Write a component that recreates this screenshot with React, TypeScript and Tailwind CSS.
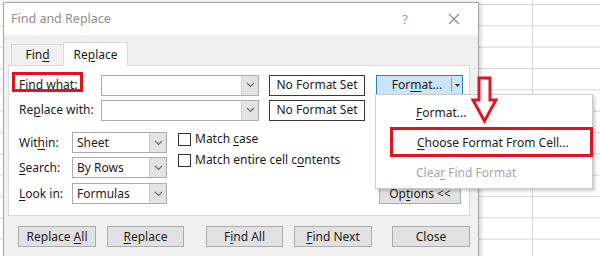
import React from "react";

const U = ({ children }: { children: React.ReactNode }) => (
  <span className="underline underline-offset-[2px] decoration-[1px]">{children}</span>
);

const Chevron = () => (
  <svg width="9" height="6" viewBox="0 0 9 6">
    <path d="M1 1 L4.5 4.5 L8 1" fill="none" stroke="#6d6d6d" strokeWidth="1.2" />
  </svg>
);

function Combo({ className, text }: { className: string; text?: string }) {
  return (
    <div className={"flex border border-[#acacac] bg-white " + className}>
      <div className="flex-1 pl-[4px] flex items-center text-[#1b1b1b]">{text}</div>
      <div className="w-[17px] bg-[#e3e3e3] border-l border-[#cfcfcf] flex items-center justify-center">
        <Chevron />
      </div>
    </div>
  );
}

function Btn({ className, children }: { className: string; children: React.ReactNode }) {
  return (
    <div
      className={
        "h-[21px] bg-[#e1e1e1] border border-[#adadad] flex items-center justify-center text-[#1b1b1b] " +
        className
      }
    >
      <span className="whitespace-pre">{children}</span>
    </div>
  );
}

function Check({ children }: { children: React.ReactNode }) {
  return (
    <div className="flex items-center h-[14px]">
      <div className="w-[13px] h-[13px] border border-[#333] bg-white" />
      <span className="ml-[4px] text-[#1b1b1b]">{children}</span>
    </div>
  );
}

export default function App() {
  return (
    <div className="relative w-[600px] h-[256px] overflow-hidden bg-white [font-family:'Noto_Sans',sans-serif] text-[12px] leading-none [background-image:linear-gradient(to_bottom,#d6d6d6_1px,transparent_1px),linear-gradient(to_right,#d6d6d6_1px,transparent_1px)] [background-size:100%_21.33px,600px_100%] [background-position:0_4px,532px_0] [background-repeat:repeat-y,no-repeat]">
      {/* Dialog window */}
      <div className="absolute left-[3px] top-[2px] w-[476px] h-[262px] bg-[#f0f0f0] border border-[#a6a6a6] shadow-[2px_0_4px_rgba(0,0,0,0.18)] flex flex-col">
        {/* Title bar */}
        <div className="h-[32px] bg-white flex items-center pl-[7px] pr-[18px] text-[#8d8d8d] text-[12.5px]">
          <span>Find and Replace</span>
          <span className="ml-auto mr-[40px] text-[13px] text-[#9a9a9a]">?</span>
          <svg width="12" height="12" viewBox="0 0 12 12">
            <path d="M1 1 L11 11 M11 1 L1 11" stroke="#8a8a8a" strokeWidth="1.1" />
          </svg>
        </div>

        {/* Tabs */}
        <div className="flex items-end pl-[7px] h-[30px]">
          <div className="w-[53px] h-[21px] border border-b-0 border-[#d9d9d9] flex items-center justify-center text-[#1b1b1b]">
            <span>
              Fin<U>d</U>
            </span>
          </div>
          <div className="w-[65px] h-[24px] -ml-[1px] bg-white border border-b-0 border-[#d9d9d9] flex items-center justify-center text-[#1b1b1b] relative top-[1px] z-10">
            <span>
              Re<U>p</U>lace
            </span>
          </div>
        </div>

        {/* Panel */}
        <div className="ml-[4px] w-[462px] h-[151px] bg-white border border-[#d9d9d9] pt-[9px] pl-[10px] relative">
          <div className="flex items-center h-[20px]">
            <div className="w-[82px] relative">
              <span className="text-[#1b1b1b]">
                Fi<U>n</U>d what:
              </span>
              <div className="absolute left-[-7px] top-[-7px] w-[71px] h-[20px] border-[3px] border-[#e0141e]" />
            </div>
            <Combo className="w-[158px] h-[21px]" />
            <div className="ml-[10px] w-[96px] h-[21px] border-[1.5px] border-[#3a3a3a] flex items-center justify-center text-[#1b1b1b]">
              No Format Set
            </div>
            <div className="ml-[11px] w-[87px] h-[20px] bg-[#cce4f7] border border-[#2c7cc5] flex items-center text-[#1b1b1b]">
              <div className="flex-1 text-center pl-[6px]">
                For<U>m</U>at...
              </div>
              <div className="w-[11px] h-[14px] border-l border-[#7aa6cf] flex items-center justify-center">
                <svg width="5" height="3" viewBox="0 0 5 3">
                  <path d="M0 0 L5 0 L2.5 3 Z" fill="#333" />
                </svg>
              </div>
            </div>
          </div>
          <div className="flex items-center h-[20px] mt-[5px]">
            <div className="w-[82px] text-[#1b1b1b]">
              Re<U>p</U>lace with:
            </div>
            <Combo className="w-[158px] h-[21px]" />
            <div className="ml-[10px] w-[96px] h-[21px] border-[1.5px] border-[#3a3a3a] flex items-center justify-center text-[#1b1b1b]">
              No Format Set
            </div>
          </div>

          <div className="flex mt-[12px]">
            <div className="flex flex-col gap-[4px]">
              <div className="flex items-center h-[21px]">
                <div className="w-[53px] text-[#1b1b1b]">
                  Wit<U>h</U>in:
                </div>
                <Combo className="w-[95px] h-[21px]" text="Sheet" />
              </div>
              <div className="flex items-center h-[21px]">
                <div className="w-[53px] text-[#1b1b1b]">
                  <U>S</U>earch:
                </div>
                <Combo className="w-[95px] h-[21px]" text="By Rows" />
              </div>
              <div className="flex items-center h-[21px] mt-[1px]">
                <div className="w-[53px] text-[#1b1b1b]">
                  <U>L</U>ook in:
                </div>
                <Combo className="w-[95px] h-[21px]" text="Formulas" />
              </div>
            </div>
            <div className="ml-[11px] flex flex-col gap-[7px]">
              <Check>
                Match <U>c</U>ase
              </Check>
              <Check>
                Match entire cell c<U>o</U>ntents
              </Check>
            </div>
            <div className="ml-auto mr-[8px] self-end">
              <Btn className="w-[82px] h-[19px]">
                Op<U>t</U>ions &lt;&lt;
              </Btn>
            </div>
          </div>
        </div>

        {/* Bottom buttons */}
        <div className="flex pl-[14px] mt-[10px]">
          <Btn className="w-[78px]">
            Replace <U>A</U>ll
          </Btn>
          <Btn className="w-[77px] ml-[11px]">
            <U>R</U>eplace
          </Btn>
          <Btn className="w-[77px] ml-[22px]">
            F<U>i</U>nd All
          </Btn>
          <Btn className="w-[78px] ml-[11px]">
            <U>F</U>ind Next
          </Btn>
          <Btn className="w-[78px] ml-[20px]">Close</Btn>
        </div>
      </div>

      {/* Dropdown menu */}
      <div className="absolute left-[375px] top-[94px] w-[218px] h-[95px] bg-white border border-[#cccccc] shadow-[2px_2px_3px_rgba(0,0,0,0.2)] flex flex-col text-[#1b1b1b]">
        <div className="h-[33px] flex items-center pl-[40px] pt-[2px]">
          <span>
            <U>F</U>ormat...
          </span>
        </div>
        <div className="relative h-[29px] flex items-center pl-[41px]">
          <div className="absolute left-[14px] -top-[1px] w-[203px] h-[30px] border-[3px] border-[#e0141e]" />
          <span>
            <U>C</U>hoose Format From Cell...
          </span>
        </div>
        <div className="h-[31px] flex items-center pl-[40px] text-[#a6a6a6]">
          <span>
            Clea<U>r</U> Find Format
          </span>
        </div>
      </div>

      {/* Red arrow */}
      <svg className="absolute left-[471px] top-[76px]" width="27" height="48" viewBox="0 0 27 48">
        <path
          d="M8 2 L19 2 L19 24 L25 24 L13.5 45 L2 24 L8 24 Z"
          fill="white"
          stroke="#e0141e"
          strokeWidth="3"
          strokeLinejoin="miter"
        />
      </svg>
    </div>
  );
}
